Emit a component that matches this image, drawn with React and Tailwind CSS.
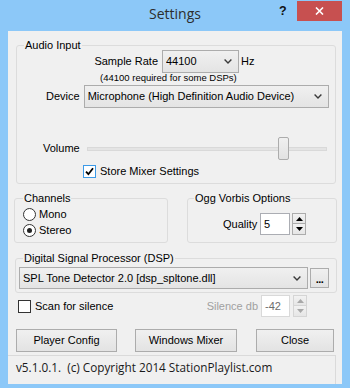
import React from "react";

function Chevron() {
  return (
    <svg width="8" height="5" viewBox="0 0 8 5" className="shrink-0">
      <path d="M0.6 0.6 L4 4 L7.4 0.6" fill="none" stroke="#3a3a3a" strokeWidth="1.4" />
    </svg>
  );
}

function Combo({ text, className }) {
  return (
    <div
      className={`flex items-center border border-[#acacac] bg-gradient-to-b from-[#f0f0f0] to-[#e4e4e4] pl-[3px] pr-[6px] ${className}`}
    >
      <span className="flex-1 whitespace-nowrap overflow-hidden">{text}</span>
      <Chevron />
    </div>
  );
}

function Spin({ disabled }) {
  const border = disabled ? "border-[#d5d5d5]" : "border-[#acacac]";
  const fill = disabled ? "#a8a8a8" : "#000";
  return (
    <div className="flex flex-col w-[14px] h-[22px]">
      <div className={`h-[11px] border ${border} bg-gradient-to-b from-[#f2f2f2] to-[#e6e6e6] flex items-center justify-center`}>
        <svg width="7" height="4" viewBox="0 0 7 4">
          <path d="M0 4 L3.5 0 L7 4Z" fill={fill} />
        </svg>
      </div>
      <div className={`h-[11px] border ${border} border-t-0 bg-gradient-to-b from-[#f2f2f2] to-[#e6e6e6] flex items-center justify-center`}>
        <svg width="7" height="4" viewBox="0 0 7 4">
          <path d="M0 0 L3.5 4 L7 0Z" fill={fill} />
        </svg>
      </div>
    </div>
  );
}

function Group({ label, className, labelLeft, children }) {
  return (
    <div className={`relative border border-[#dcdcdc] rounded-[3px] ${className}`}>
      <span
        className={`absolute top-[-7px] px-[1px] bg-[#f0f0f0] leading-[13px] whitespace-nowrap ${labelLeft}`}
      >
        {label}
      </span>
      {children}
    </div>
  );
}

function Check({ checked, focus }) {
  return (
    <div
      className={`w-[13px] h-[13px] shrink-0 bg-white border flex items-center justify-center ${
        focus ? "border-[#3c9ae8]" : "border-[#333333]"
      }`}
    >
      {checked && (
        <svg width="9" height="9" viewBox="0 0 9 9">
          <path d="M1 4.6 L3.4 7.2 L8 1.2" fill="none" stroke="#000" strokeWidth="1.8" />
        </svg>
      )}
    </div>
  );
}

function Radio({ checked }) {
  return (
    <div className="w-[13px] h-[13px] shrink-0 rounded-full bg-white border border-[#333333] flex items-center justify-center">
      {checked && <div className="w-[5px] h-[5px] rounded-full bg-[#222]" />}
    </div>
  );
}

function Btn({ children, className }) {
  return (
    <div
      className={`h-[23px] flex items-center justify-center border border-[#acacac] bg-gradient-to-b from-[#f0f0f0] to-[#e3e3e3] ${className}`}
    >
      {children}
    </div>
  );
}

export default function App() {
  return (
    <div className="w-[350px] h-[388px] bg-[#8cc8f8] flex flex-col font-['Liberation_Sans',Arial,sans-serif] text-[11px] leading-[13px] text-black overflow-hidden">
      {/* title bar */}
      <div className="relative h-[31px] shrink-0 flex justify-center">
        <span className="mt-[4px] font-['Open_Sans',sans-serif] text-[14px] leading-[20px] text-[#2d2d2d]">
          Settings
        </span>
        <span className="absolute left-[279px] top-[4px] font-bold text-[12.5px] leading-[14px] text-[#111]">
          ?
        </span>
        <div className="absolute left-[297px] top-[1px] w-[45px] h-[20px] bg-[#c75050] flex items-center justify-center">
          <svg width="9" height="8" viewBox="0 0 9 8">
            <path d="M1 0.5 L8 7.5 M8 0.5 L1 7.5" stroke="#fff" strokeWidth="1.6" />
          </svg>
        </div>
      </div>

      {/* client area */}
      <div className="ml-[8px] w-[334px] h-[353px] shrink-0 bg-[#f0f0f0] flex flex-col">
        {/* Audio Input */}
        <Group label="Audio Input" labelLeft="left-[7px]" className="ml-[8px] mt-[14px] w-[320px] h-[139px]">
          <div className="flex items-center mt-[4px] pl-[77px]">
            <span className="w-[64px] text-right whitespace-nowrap">Sample Rate</span>
            <Combo text="44100" className="ml-[4px] w-[77px] h-[23px]" />
            <span className="ml-[2px]">Hz</span>
          </div>
          <div className="pl-[83px] text-[9.5px] leading-[11px] -mt-px whitespace-nowrap">
            (44100 required for some DSPs)
          </div>
          <div className="flex items-center mt-[2px] pl-[29px]">
            <span>Device</span>
            <Combo
              text="Microphone (High Definition Audio Device)"
              className="ml-[4px] w-[245px] h-[23px]"
            />
          </div>
          <div className="flex items-center mt-[29px] h-[23px] pl-[26px]">
            <span className="w-[44px]">Volume</span>
            <div className="relative w-[240px] h-[23px] flex items-center">
              <div className="w-full h-[4px] bg-[#e4e4e4] border border-[#d9d9d9]" />
              <div className="absolute left-[191px] top-0 w-[11px] h-[23px] bg-gradient-to-b from-[#f0f0f0] to-[#e2e2e2] border border-[#acacac] rounded-[2px]" />
            </div>
          </div>
          <div className="flex items-center mt-[5px] pl-[66px]">
            <Check checked focus />
            <span className="ml-[4px]">Store Mixer Settings</span>
          </div>
        </Group>

        {/* Channels / Ogg */}
        <div className="flex mt-[14px]">
          <Group label="Channels" labelLeft="left-[8px]" className="ml-[6px] w-[154px] h-[45px]">
            <div className="flex items-center mt-[9px] pl-[8px]">
              <Radio />
              <span className="ml-[3px]">Mono</span>
            </div>
            <div className="flex items-center mt-[3px] pl-[8px]">
              <Radio checked />
              <span className="ml-[3px]">Stereo</span>
            </div>
          </Group>
          <Group label="Ogg Vorbis Options" labelLeft="left-[6px]" className="ml-[19px] w-[150px] h-[45px]">
            <div className="flex items-center mt-[14px] pl-[35px]">
              <span className="w-[37px]">Quality</span>
              <div className="w-[30px] h-[22px] bg-white border border-[#abadb3] flex items-center pl-[3px]">
                5
              </div>
              <div className="ml-[2px]">
                <Spin />
              </div>
            </div>
          </Group>
        </div>

        {/* DSP */}
        <Group
          label="Digital Signal Processor (DSP)"
          labelLeft="left-[7px]"
          className="ml-[7px] mt-[15px] w-[322px] h-[35px]"
        >
          <div className="flex items-center mt-[8px] pl-[3px]">
            <Combo
              text="SPL Tone Detector 2.0 [dsp_spltone.dll]"
              className="w-[289px] h-[22px]"
            />
            <div className="ml-[2px] w-[19px] h-[20px] border border-[#acacac] bg-gradient-to-b from-[#f0f0f0] to-[#e3e3e3] flex items-end justify-center pb-[4px]">
              <span className="font-bold leading-[8px] tracking-[-0.5px]">...</span>
            </div>
          </div>
        </Group>

        {/* Scan row */}
        <div className="flex items-center h-[22px] mt-[2px] pl-[10px] pr-[35px]">
          <Check />
          <span className="ml-[4px]">Scan for silence</span>
          <span className="ml-auto text-[#a0a0a0]">Silence db</span>
          <div className="ml-[3px] w-[29px] h-[22px] bg-white border border-[#d9d9d9] flex items-center pl-[3px] text-[#6d6d6d]">
            -42
          </div>
          <div className="ml-[3px]">
            <Spin disabled />
          </div>
        </div>

        {/* buttons */}
        <div className="flex mt-[12px] pl-[8px]">
          <Btn className="w-[101px]">Player Config</Btn>
          <Btn className="ml-[18px] w-[102px]">Windows Mixer</Btn>
          <Btn className="ml-[19px] w-[78px]">Close</Btn>
        </div>

        {/* status bar */}
        <div className="mt-[3px] h-[29px] w-[328px] border-t border-r border-[#dadada] pl-[8px] pt-[3px] font-['Open_Sans',sans-serif] text-[11.75px] leading-[16px] text-[#1a1a1a] whitespace-nowrap">
          v5.1.0.1.&nbsp; (c) Copyright 2014 StationPlaylist.com
        </div>
      </div>
    </div>
  );
}
